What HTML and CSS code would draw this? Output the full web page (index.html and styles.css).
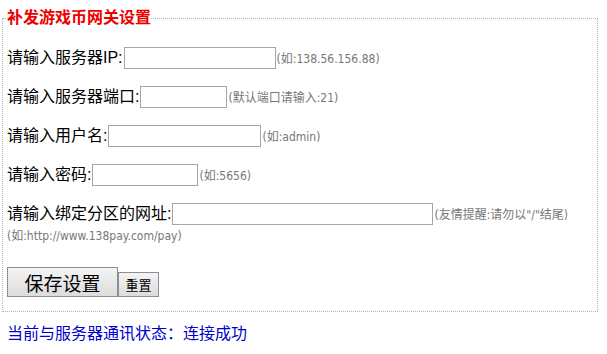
FILE: index.html
```html
<!DOCTYPE html>
<html>
<head>
<meta charset="utf-8">
<title>补发游戏币网关设置</title>
<link rel="stylesheet" href="styles.css">
</head>
<body>
  <fieldset class="box">
    <legend class="box-title">补发游戏币网关设置</legend>
    <div class="row">
      <label>请输入服务器IP:</label><input type="text" class="w-ip"><span class="tip">(如:138.56.156.88)</span>
    </div>
    <div class="row">
      <label>请输入服务器端口:</label><input type="text" class="w-port"><span class="tip">(默认端口请输入:21)</span>
    </div>
    <div class="row">
      <label>请输入用户名:</label><input type="text" class="w-user"><span class="tip">(如:admin)</span>
    </div>
    <div class="row">
      <label>请输入密码:</label><input type="text" class="w-pass"><span class="tip">(如:5656)</span>
    </div>
    <div class="row">
      <label>请输入绑定分区的网址:</label><input type="text" class="w-url"><span class="tip">(友情提醒:请勿以"/"结尾)</span>
    </div>
    <div class="tip tip-line">(如:http://www.138pay.com/pay)</div>
    <div class="buttons">
      <button class="btn-save">保存设置</button><button class="btn-reset">重置</button>
    </div>
  </fieldset>
  <div class="status">当前与服务器通讯状态：连接成功</div>
</body>
</html>
```

FILE: styles.css
```css
body {
  margin: 0;
  font-family: "Liberation Sans", "Noto Sans CJK SC", sans-serif;
  font-size: 16px;
  color: #000;
}
.box {
  margin: 10px 9px 0 2px;
  padding: 0 4px 14px 4px;
  border: 1px dotted #b5b5b5;
}
.box-title {
  color: #e00;
  font-weight: bold;
  font-size: 16px;
  padding: 0;
  line-height: 16px;
}
.row {
  display: flex;
  align-items: center;
  height: 23px;
  margin-top: 16px;
}
.row:first-of-type {
  margin-top: 20px;
}
.row label {
  line-height: 23px;
}
.row input {
  box-sizing: border-box;
  height: 22px;
  border: 1px solid #a5a5a5;
  margin: 0 1px;
  padding: 0 2px;
}
.tip {
  font-family: "DejaVu Sans Condensed", "Noto Sans CJK SC", sans-serif;
  font-size: 12px;
  color: #777;
}
.tip-line {
  margin-top: 3px;
  line-height: 16px;
}
.w-ip { width: 152px; }
.w-port { width: 87px; }
.w-user { width: 153px; }
.w-pass { width: 106px; }
.w-url { width: 261px; }
.buttons {
  display: flex;
  align-items: flex-end;
  margin-top: 23px;
}
.buttons button {
  font-family: "Liberation Sans", "Noto Sans CJK SC", sans-serif;
  border: 1px solid #8f8f8f;
  background: linear-gradient(#f4f4f4, #dcdcdc);
  color: #000;
  padding: 0;
}
.btn-save {
  width: 111px;
  height: 30px;
  font-size: 19px;
}
.btn-reset {
  width: 41px;
  height: 25px;
  font-size: 13px;
  font-weight: normal;
}
.status {
  margin: 8px 0 0 7px;
  color: #0000cc;
  font-size: 16px;
}
```
